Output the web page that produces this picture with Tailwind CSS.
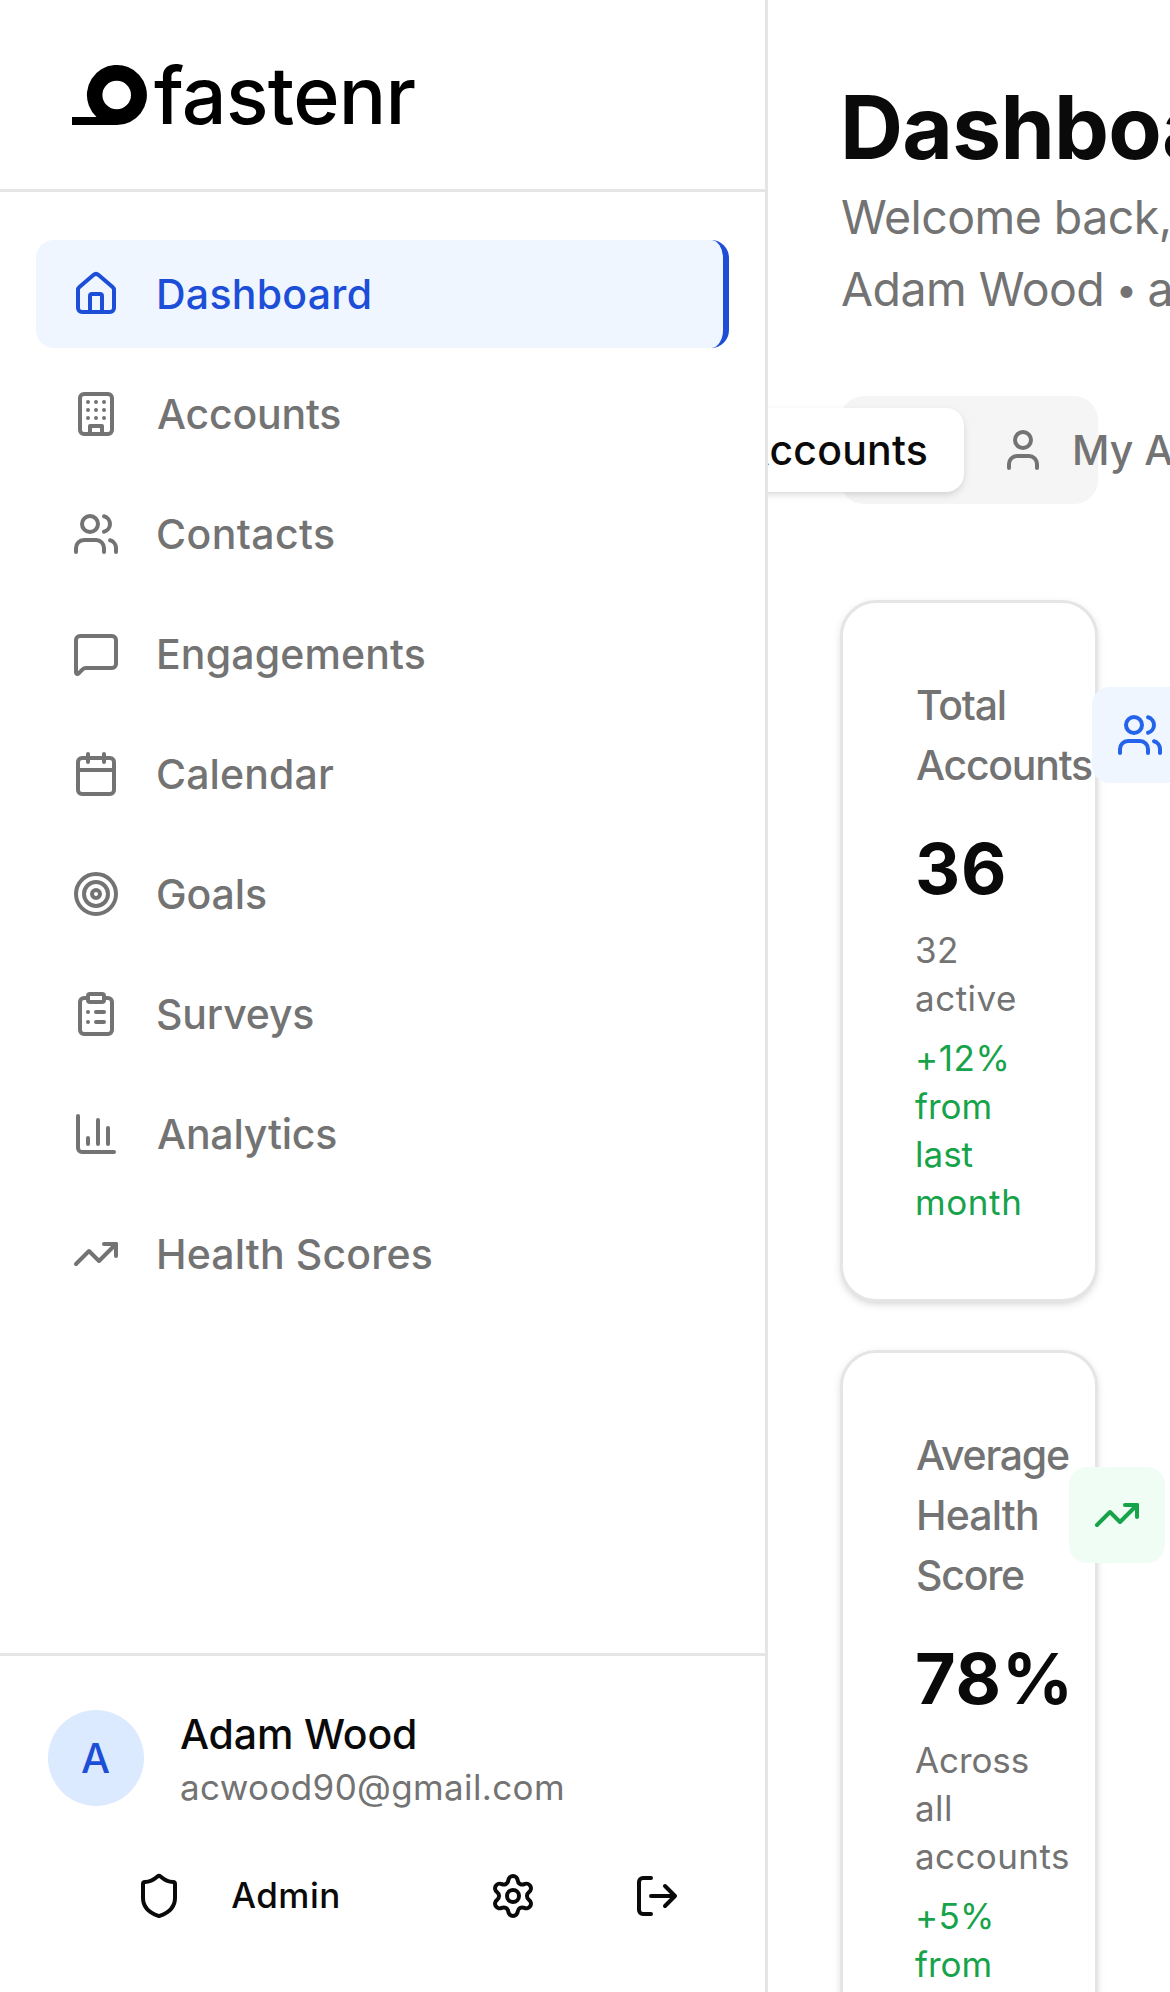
<!DOCTYPE html>
<html lang="en">
<head>
<meta charset="utf-8">
<title>fastenr – Dashboard</title>
<script src="https://cdn.jsdelivr.net/npm/@tailwindcss/browser@4"></script>
</head>
<body class="h-[1992px] w-[1170px] overflow-hidden bg-white font-['Inter',sans-serif] text-[#0a0a0a] antialiased">

<!-- Icon symbols -->
<svg class="hidden">
  <symbol id="house" viewBox="0 0 24 24"><path d="M15 21v-8a1 1 0 0 0-1-1h-4a1 1 0 0 0-1 1v8"/><path d="M3 10a2 2 0 0 1 .709-1.528l7-5.999a2 2 0 0 1 2.582 0l7 5.999A2 2 0 0 1 21 10v9a2 2 0 0 1-2 2H5a2 2 0 0 1-2-2z"/></symbol>
  <symbol id="building" viewBox="0 0 24 24"><rect width="16" height="20" x="4" y="2" rx="2"/><path d="M9 22v-4h6v4M8 6h.01M16 6h.01M12 6h.01M12 10h.01M12 14h.01M16 10h.01M16 14h.01M8 10h.01M8 14h.01"/></symbol>
  <symbol id="users" viewBox="0 0 24 24"><path d="M16 21v-2a4 4 0 0 0-4-4H6a4 4 0 0 0-4 4v2"/><path d="M16 3.128a4 4 0 0 1 0 7.744"/><path d="M22 21v-2a4 4 0 0 0-3-3.87"/><circle cx="9" cy="7" r="4"/></symbol>
  <symbol id="message" viewBox="0 0 24 24"><path d="M22 17a2 2 0 0 1-2 2H6.828a2 2 0 0 0-1.414.586l-2.202 2.202A.71.71 0 0 1 2 21.286V5a2 2 0 0 1 2-2h16a2 2 0 0 1 2 2z"/></symbol>
  <symbol id="calendar" viewBox="0 0 24 24"><path d="M8 2v4M16 2v4"/><rect width="18" height="18" x="3" y="4" rx="2"/><path d="M3 10h18"/></symbol>
  <symbol id="target" viewBox="0 0 24 24"><circle cx="12" cy="12" r="10"/><circle cx="12" cy="12" r="6"/><circle cx="12" cy="12" r="2"/></symbol>
  <symbol id="clipboard" viewBox="0 0 24 24"><rect width="8" height="4" x="8" y="2" rx="1"/><path d="M16 4h2a2 2 0 0 1 2 2v14a2 2 0 0 1-2 2H6a2 2 0 0 1-2-2V6a2 2 0 0 1 2-2h2"/><path d="M12 11h4M12 16h4M8 11h.01M8 16h.01"/></symbol>
  <symbol id="chart" viewBox="0 0 24 24"><path d="M3 3v16a2 2 0 0 0 2 2h16M18 17V9M13 17V5M8 17v-3"/></symbol>
  <symbol id="trending" viewBox="0 0 24 24"><path d="M16 7h6v6"/><path d="m22 7-8.5 8.5-5-5L2 17"/></symbol>
  <symbol id="shield" viewBox="0 0 24 24"><path d="M20 13c0 5-3.5 7.5-7.66 8.95a1 1 0 0 1-.67-.01C7.5 20.5 4 18 4 13V6a1 1 0 0 1 1-1c2 0 4.5-1.2 6.24-2.72a1.17 1.17 0 0 1 1.52 0C14.51 3.81 17 5 19 5a1 1 0 0 1 1 1z"/></symbol>
  <symbol id="settings" viewBox="0 0 24 24"><path d="M9.671 4.136a2.34 2.34 0 0 1 4.659 0 2.34 2.34 0 0 0 3.319 1.915 2.34 2.34 0 0 1 2.33 4.033 2.34 2.34 0 0 0 0 3.831 2.34 2.34 0 0 1-2.33 4.033 2.34 2.34 0 0 0-3.319 1.915 2.34 2.34 0 0 1-4.659 0 2.34 2.34 0 0 0-3.32-1.915 2.34 2.34 0 0 1-2.33-4.033 2.34 2.34 0 0 0 0-3.831A2.34 2.34 0 0 1 6.35 6.051a2.34 2.34 0 0 0 3.319-1.915"/><circle cx="12" cy="12" r="3"/></symbol>
  <symbol id="logout" viewBox="0 0 24 24"><path d="m16 17 5-5-5-5M21 12H9M9 21H5a2 2 0 0 1-2-2V5a2 2 0 0 1 2-2h4"/></symbol>
  <symbol id="user" viewBox="0 0 24 24"><path d="M19 21v-2a4 4 0 0 0-4-4H9a4 4 0 0 0-4 4v2"/><circle cx="12" cy="7" r="4"/></symbol>
</svg>

<div class="flex h-full">
  <aside class="relative z-10 flex h-full w-[768px] shrink-0 flex-col border-r-3 border-[#e5e5e5] bg-white">
    <div class="flex h-48 shrink-0 items-center border-b-3 border-[#e5e5e5] pl-18">
      <svg class="h-15 w-[75px] shrink-0" viewBox="0 0 75 60"><path fill="#000" fill-rule="evenodd" d="M0 52H24.500A30 30 0 1 1 44.700 60H0ZM44.700 15.700a14.300 14.300 0 1 0 0 28.600a14.300 14.300 0 1 0 0-28.600Z"/></svg>
      <span class="ml-[7px] text-[79px] leading-24 font-medium tracking-[-0.75px] text-black">fastenr</span>
    </div>

    <nav class="flex flex-1 flex-col gap-3 px-9 pt-12 text-[41px] leading-15 font-medium text-[#737373]">
      <a class="flex h-27 items-center gap-9 rounded-[18px] border-r-6 border-[#1d4ed8] bg-[#eff6ff] px-9 tracking-[0.28px] text-[#1d4ed8]"><svg class="size-12 fill-none stroke-current stroke-2 [stroke-linecap:round] [stroke-linejoin:round]"><use href="#house"/></svg>Dashboard</a>
      <a class="flex h-27 items-center gap-[37px] px-9 tracking-[-0.2px]"><svg class="size-12 fill-none stroke-current stroke-2 [stroke-linecap:round] [stroke-linejoin:round]"><use href="#building"/></svg>Accounts</a>
      <a class="flex h-27 items-center gap-9 px-9 tracking-[0.4px]"><svg class="size-12 fill-none stroke-current stroke-2 [stroke-linecap:round] [stroke-linejoin:round]"><use href="#users"/></svg>Contacts</a>
      <a class="flex h-27 items-center gap-9 px-9 tracking-[0.14px]"><svg class="size-12 fill-none stroke-current stroke-2 [stroke-linecap:round] [stroke-linejoin:round]"><use href="#message"/></svg>Engagements</a>
      <a class="flex h-27 items-center gap-9 px-9 tracking-[0.13px]"><svg class="size-12 fill-none stroke-current stroke-2 [stroke-linecap:round] [stroke-linejoin:round]"><use href="#calendar"/></svg>Calendar</a>
      <a class="flex h-27 items-center gap-9 px-9 tracking-[-0.1px]"><svg class="size-12 fill-none stroke-current stroke-2 [stroke-linecap:round] [stroke-linejoin:round]"><use href="#target"/></svg>Goals</a>
      <a class="flex h-27 items-center gap-9 px-9 tracking-[-0.17px]"><svg class="size-12 fill-none stroke-current stroke-2 [stroke-linecap:round] [stroke-linejoin:round]"><use href="#clipboard"/></svg>Surveys</a>
      <a class="flex h-27 items-center gap-[37px] px-9 tracking-[-0.19px]"><svg class="size-12 fill-none stroke-current stroke-2 [stroke-linecap:round] [stroke-linejoin:round]"><use href="#chart"/></svg>Analytics</a>
      <a class="flex h-27 items-center gap-9 px-9 tracking-[0.15px]"><svg class="size-12 fill-none stroke-current stroke-2 [stroke-linecap:round] [stroke-linejoin:round]"><use href="#trending"/></svg>Health Scores</a>
    </nav>

    <div class="shrink-0 border-t-3 border-[#e5e5e5] p-12">
      <div class="flex items-center gap-9">
        <div class="flex size-24 items-center justify-center rounded-full bg-[#dbeafe] pr-px text-[41px] leading-15 font-medium text-[#1d4ed8]">A</div>
        <div>
          <p class="text-[41px] leading-15 font-medium tracking-[-0.16px]">Adam Wood</p>
          <p class="-mt-px mb-px text-[35px] leading-12 tracking-[0.36px] text-[#737373]">acwood90@gmail.com</p>
        </div>
      </div>
      <div class="mt-9 flex gap-6">
        <button class="flex h-24 flex-1 items-center justify-center gap-12 pr-px text-[35px] leading-12 font-medium tracking-[0.48px]"><svg class="size-12 fill-none stroke-current stroke-2 [stroke-linecap:round] [stroke-linejoin:round]"><use href="#shield"/></svg><span class="pb-0.5">Admin</span></button>
        <button class="flex h-24 w-30 items-center justify-center"><svg class="size-12 fill-none stroke-current stroke-2 [stroke-linecap:round] [stroke-linejoin:round]"><use href="#settings"/></svg></button>
        <button class="flex h-24 w-30 items-center justify-center"><svg class="size-12 fill-none stroke-current stroke-2 [stroke-linecap:round] [stroke-linejoin:round]"><use href="#logout"/></svg></button>
      </div>
    </div>
  </aside>

  <main class="w-[402px] shrink-0 p-18">
    <h1 class="mt-px text-[87.3px] leading-27 font-bold tracking-[-0.74px]">Dashboard</h1>
    <p class="-mb-px pl-px text-[46.5px] leading-18 tracking-[-0.55px] whitespace-nowrap text-[#737373]">Welcome back,<br>Adam Wood <span class="mr-[-1.5px] ml-[-1px] inline-block h-18 align-top text-[38px]">•</span> acwood90@gmail.com</p>

    <div class="mt-18 flex h-27 items-center justify-center rounded-[24px] bg-[#f5f5f5] text-[41px] leading-15 font-medium whitespace-nowrap text-[#737373]">
      <div class="flex h-21 w-[400px] shrink-0 items-center justify-end gap-6 rounded-[18px] bg-white px-9 tracking-[0.21px] text-[#0a0a0a] shadow-[0_3px_9px_rgb(0_0_0/0.1),0_3px_6px_-3px_rgb(0_0_0/0.1)]"><svg class="size-12 shrink-0 fill-none stroke-current stroke-2 [stroke-linecap:round] [stroke-linejoin:round]"><use href="#building"/></svg>All Accounts</div>
      <div class="flex h-21 w-[410px] shrink-0 items-center gap-[25px] pr-9 pl-[35px]"><svg class="size-12 shrink-0 fill-none stroke-current stroke-2 [stroke-linecap:round] [stroke-linejoin:round]"><use href="#user"/></svg>My Accounts</div>
    </div>

    <div class="mt-24 flex flex-col gap-12">
      <section class="rounded-[36px] border-3 border-[#e5e5e5] bg-white p-18 shadow-[0_3px_9px_rgb(0_0_0/0.1),0_3px_6px_-3px_rgb(0_0_0/0.1)]">
        <div class="flex items-center">
          <h2 class="w-[177px] shrink-0 pl-px text-[41px] leading-15 font-medium tracking-[-1.25px] text-[#737373]">Total<br>Accounts</h2>
          <div class="flex size-24 shrink-0 items-center justify-center rounded-[18px] bg-[#eff6ff] text-[#2563eb]"><svg class="size-12 fill-none stroke-current stroke-2 [stroke-linecap:round] [stroke-linejoin:round]"><use href="#users"/></svg></div>
        </div>
        <div class="mt-[26px] text-[70px] leading-24 font-bold tracking-[0.8px]">36</div>
        <p class="mt-[9px] text-[35px] leading-12 tracking-[0.5px] text-[#737373]">32<br>active</p>
        <p class="mt-3 mb-px text-[35px] leading-12 tracking-[0.6px] text-[#16a34a]">+12%<br><span class="tracking-normal">from<br>last</span><br>month</p>
      </section>

      <section class="rounded-[36px] border-3 border-[#e5e5e5] bg-white p-18 shadow-[0_3px_9px_rgb(0_0_0/0.1),0_3px_6px_-3px_rgb(0_0_0/0.1)]">
        <div class="flex items-center">
          <h2 class="w-[154px] shrink-0 pl-px text-[41px] leading-15 font-medium tracking-[-1.25px] text-[#737373]">Average<br><span class="tracking-[-0.85px]">Health</span><br>Score</h2>
          <div class="flex size-24 shrink-0 items-center justify-center rounded-[18px] bg-[#f0fdf4] pr-px text-[#16a34a]"><svg class="size-12 fill-none stroke-current stroke-2 [stroke-linecap:round] [stroke-linejoin:round]"><use href="#trending"/></svg></div>
        </div>
        <div class="mt-[26px] text-[70px] leading-24 font-bold tracking-[0.8px]">78%</div>
        <p class="mt-[9px] text-[35px] leading-12 tracking-[0.4px] text-[#737373]"><span class="tracking-[-0.1px]">Across</span><br>all<br>accounts</p>
        <p class="mt-3 text-[35px] leading-12 tracking-[0.3px] text-[#16a34a]">+5%<br><span class="tracking-normal">from<br>last</span><br>month</p>
      </section>
    </div>
  </main>
</div>
</body>
</html>
